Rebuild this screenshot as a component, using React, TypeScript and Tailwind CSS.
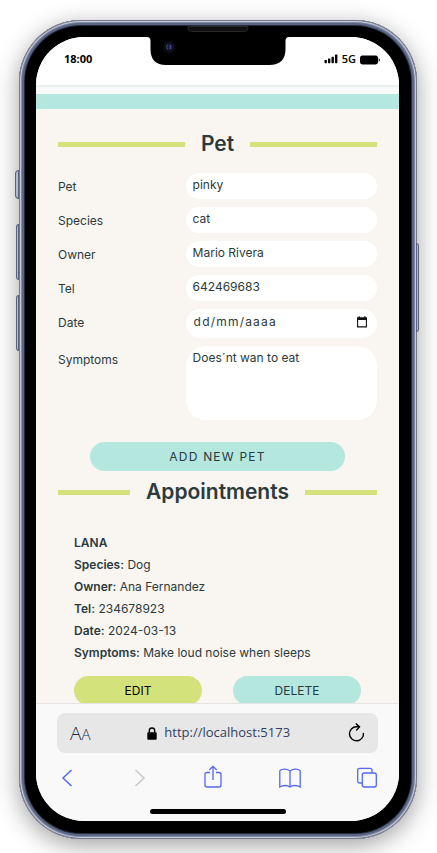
import type { ReactNode } from "react";

const fieldClass =
  "block w-full min-w-0 rounded-[20px] bg-white px-[7px] pb-1 text-[12px] leading-4 text-[#2b3a3d] outline-none";

function Heading({ children }: { children: ReactNode }) {
  return (
    <h2 className="flex items-center gap-4 text-[21px] leading-7 font-semibold text-[#2b3a3d]">
      <span className="h-[5px] flex-1 bg-[#d4e27c]" />
      {children}
      <span className="h-[5px] flex-1 bg-[#d4e27c]" />
    </h2>
  );
}

function Row({ id, label, children }: { id: string; label: string; children: ReactNode }) {
  return (
    <div className="grid grid-cols-[minmax(0,2fr)_minmax(0,3fr)] items-start">
      <label htmlFor={id} className="pt-[6px] leading-4">
        {label}
      </label>
      {children}
    </div>
  );
}

function StatusBar() {
  return (
    <header className="flex h-12 shrink-0 items-center justify-between bg-white pr-[19px] pb-1 pl-[28px] font-['Open_Sans',sans-serif] text-[11px] text-black">
      <span className="font-bold">18:00</span>
      <span className="flex items-center gap-1 font-semibold">
        <svg width="14" height="10" viewBox="0 0 14 10" aria-hidden="true">
          <rect x="0.5" y="6" width="2.4" height="3.2" rx="0.6" />
          <rect x="4" y="4.5" width="2.4" height="4.7" rx="0.6" />
          <rect x="7.5" y="2.8" width="2.4" height="6.4" rx="0.6" />
          <rect x="11" y="0.6" width="2.4" height="8.6" rx="0.6" />
        </svg>
        5G
        <svg width="20" height="10" viewBox="0 0 20 10" className="translate-y-px" aria-hidden="true">
          <rect x="0" y="0.5" width="18" height="9" rx="2.4" />
          <path d="M18.7 3.3q1.2.6 1.2 1.7t-1.2 1.7z" />
        </svg>
      </span>
    </header>
  );
}

function Notch() {
  return (
    <svg
      className="absolute -top-px left-1/2 -translate-x-1/2"
      width="142"
      height="30"
      viewBox="0 0 142 30"
      aria-hidden="true"
    >
      <path d="M0 0H142V1Q138.500 1 138.500 5V13Q138.500 29 122 29H19Q3.500 29 3.500 13V5Q3.500 1 0 1Z" fill="#000" />
      <circle cx="22" cy="11" r="6" fill="#0d0d14" />
      <circle cx="22" cy="11" r="3.600" fill="#181830" />
      <path d="M20.500 8.500q-1.600 2.500 0 5" stroke="#3a4a68" strokeWidth="1" fill="none" />
      <path d="M23.500 9v4" stroke="#4040a0" strokeWidth="1.600" fill="none" />
    </svg>
  );
}

function PetForm() {
  return (
    <form onSubmit={(e) => e.preventDefault()}>
      <div className="mt-[15px] flex flex-col gap-2">
        <Row id="pet" label="Pet">
          <input id="pet" defaultValue="pinky" className={`${fieldClass} h-[26px]`} />
        </Row>
        <Row id="species" label="Species">
          <input id="species" defaultValue="cat" className={`${fieldClass} h-[26px]`} />
        </Row>
        <Row id="owner" label="Owner">
          <input id="owner" defaultValue="Mario Rivera" className={`${fieldClass} h-[26px]`} />
        </Row>
        <Row id="tel" label="Tel">
          <input id="tel" type="tel" defaultValue="642469683" className={`${fieldClass} h-[26px]`} />
        </Row>
        <Row id="date" label="Date">
          <div className="flex h-[29px] items-center rounded-[20px] bg-white pr-[10px] pb-1 pl-2">
            <input
              id="date"
              defaultValue="dd/mm/aaaa"
              className="min-w-0 flex-1 bg-transparent text-[12px] leading-4 tracking-widest text-[#2b3a3d] outline-none"
            />
            <button type="button" aria-label="Open calendar">
              <svg width="10" height="12" viewBox="0 0 10 12" className="block" aria-hidden="true">
                <path d="M.6 2h8.800v8.900H.6z" fill="none" stroke="#111" strokeWidth="1.100" />
                <path d="M.2 1.400h9.600V4H.2zM1.500.3h1.300v1.500H1.500zM7.200.3h1.300v1.500H7.200z" fill="#111" />
              </svg>
            </button>
          </div>
        </Row>
        <Row id="symptoms" label="Symptoms">
          <textarea
            id="symptoms"
            defaultValue="Does´nt wan to eat"
            className={`${fieldClass} h-[74px] resize-none overflow-hidden pt-1`}
          />
        </Row>
      </div>
      <button
        type="submit"
        className="mx-auto mt-[22px] block h-[29px] w-4/5 rounded-full bg-[#b4e8df] text-[12px] tracking-widest"
      >
        ADD NEW PET
      </button>
    </form>
  );
}

const details = [
  ["Species:", "Dog"],
  ["Owner:", "Ana Fernandez"],
  ["Tel:", "234678923"],
  ["Date:", "2024-03-13"],
  ["Symptoms:", "Make loud noise when sleeps"],
];

function Appointment() {
  return (
    <article className="mt-[26px] px-4 text-[12px] leading-[22px]">
      <h3 className="font-semibold">LANA</h3>
      {details.map(([name, value]) => (
        <p key={name} className="whitespace-nowrap">
          <span className="font-semibold">{name}</span> {value}
        </p>
      ))}
      <div className="mt-3 flex justify-between">
        <button className="h-[29px] w-32 rounded-full bg-[#d4e27c] text-[12px] text-black">EDIT</button>
        <button className="h-[29px] w-32 rounded-full bg-[#b4e8df] text-[12px]">DELETE</button>
      </div>
    </article>
  );
}

function BrowserBar() {
  return (
    <footer className="shrink-0 border-t border-[#e4e4e4] bg-[#f9f9f9] pt-[9px] pb-[7px]">
      <div className="mx-[21px] flex h-10 items-center justify-between rounded-lg bg-[#e7e7e7] px-[13px] font-['Open_Sans',sans-serif] text-[#32405f]">
        <button aria-label="Text size" className="flex items-baseline leading-6 font-light text-[#1c2744]">
          <span className="text-[19px]">A</span>
          <span className="text-[15px]">A</span>
        </button>
        <a href="#address" className="flex items-center gap-[7px] text-[13px]">
          <svg width="10" height="13" viewBox="0 0 10 13" aria-hidden="true">
            <rect x="0.3" y="5.300" width="9.400" height="7.500" rx="1.200" fill="#000" />
            <path d="M2.300 6V3.700a2.700 2.700 0 0 1 5.400 0V6" fill="none" stroke="#000" strokeWidth="1.500" />
          </svg>
          http://localhost:5173
        </a>
        <button aria-label="Reload">
          <svg width="18" height="20" viewBox="0 0 18 20" fill="none" stroke="#000" strokeWidth="1.400" className="block" aria-hidden="true">
            <path d="M12.500 3.800H9.500a7 7 0 1 0 6.900 6" />
            <path d="M8.800.5l3.700 3.400-3.300 3.500" />
          </svg>
        </button>
      </div>
      <nav className="mr-[22px] ml-[23px] flex h-[50px] items-center justify-between text-[#5468ee]">
        <button aria-label="Back">
          <svg width="16" height="20" viewBox="0 0 16 20" fill="none" stroke="currentColor" strokeWidth="1.500" className="block" aria-hidden="true">
            <path d="M12.500 2L4 10l8.500 8" />
          </svg>
        </button>
        <button aria-label="Forward" className="text-[#c8c8c8]">
          <svg width="16" height="20" viewBox="0 0 16 20" fill="none" stroke="currentColor" strokeWidth="1.500" className="block" aria-hidden="true">
            <path d="M3.500 2L12 10l-8.500 8" />
          </svg>
        </button>
        <button aria-label="Share">
          <svg width="18" height="26" viewBox="0 0 18 26" fill="none" stroke="currentColor" strokeWidth="1.300" className="block" aria-hidden="true">
            <path d="M6 7.500H3Q1 7.500 1 9.500V20q0 2 2 2h12q2 0 2-2V9.500q0-2-2-2H12" />
            <path d="M9 15V1.500M5.300 5L9 1.300 12.700 5" />
          </svg>
        </button>
        <button aria-label="Bookmarks">
          <svg width="22" height="20" viewBox="0 0 22 20" fill="none" stroke="currentColor" strokeWidth="1.300" className="block" aria-hidden="true">
            <path d="M11 3.200C8.800.6 3 .3.800 2.700V19C4 17 8.500 17 11 19c2.500-2 7-2 10.200 0V2.700C19 .3 13.200.6 11 3.200V19" />
          </svg>
        </button>
        <button aria-label="Tabs">
          <svg width="20" height="22" viewBox="0 0 20 22" fill="none" stroke="currentColor" strokeWidth="1.300" className="block" aria-hidden="true">
            <rect x="5.300" y="6" width="14" height="14" rx="2" />
            <path d="M5 16H2.700q-2 0-2-2V3.300q0-2 2-2H13q2 0 2 2V6" />
          </svg>
        </button>
      </nav>
      <div className="mx-auto mt-[6px] h-[5px] w-[136px] rounded-full bg-black" />
    </footer>
  );
}

export default function App() {
  return (
    <div className="flex h-screen min-h-[640px] flex-col overflow-hidden bg-white pt-5 pr-5 pb-[14px] pl-[19px]">
      <div className="relative flex min-h-0 flex-1 flex-col rounded-[62px] bg-black pt-[17px] pr-[18px] pb-[18px] pl-[17px] shadow-[inset_0_0_0_1px_#747986,inset_0_0_0_2px_#c8ccdc,inset_0_0_0_3px_#8289a5,inset_0_0_0_5px_#5b6685,inset_0_0_0_6px_#272d3c,0_6px_24px_rgba(0,0,0,0.38)]">
        <span className="absolute top-[150px] -left-1 h-[29px] w-1 rounded-l-sm border border-[#59627c] bg-[#b3bbd2]" />
        <span className="absolute top-[204px] -left-[3px] h-14 w-[3px] rounded-l-sm border border-[#59627c] bg-[#b3bbd2]" />
        <span className="absolute top-[275px] -left-[3px] h-14 w-[3px] rounded-l-sm border border-[#59627c] bg-[#b3bbd2]" />
        <span className="absolute top-[223px] -right-[2px] h-[89px] w-[3px] rounded-r-sm border border-[#59627c] bg-[#b3bbd2]" />
        <span className="absolute top-[6px] left-1/2 h-[6px] w-[61px] -translate-x-1/2 rounded-b-sm border border-[#262626] bg-[#101010]" />
        <div className="relative flex min-h-0 flex-1 flex-col overflow-hidden rounded-[48px] bg-[#f9f5f0]">
          <StatusBar />
          <Notch />
          <div className="h-[9px] shrink-0 border-t-2 border-[#ebefee] bg-[#f8faf9]" />
          <div className="h-[15px] shrink-0 bg-[#b4e8df]" />
          <main className="min-h-0 flex-1 overflow-hidden pt-[21px] pr-[22px] pl-[22px] font-['Inter',sans-serif] text-[12px] text-[#2b3a3d]">
            <Heading>Pet</Heading>
            <PetForm />
            <div className="mt-[7px]">
              <Heading>Appointments</Heading>
            </div>
            <Appointment />
          </main>
          <BrowserBar />
        </div>
      </div>
    </div>
  );
}
